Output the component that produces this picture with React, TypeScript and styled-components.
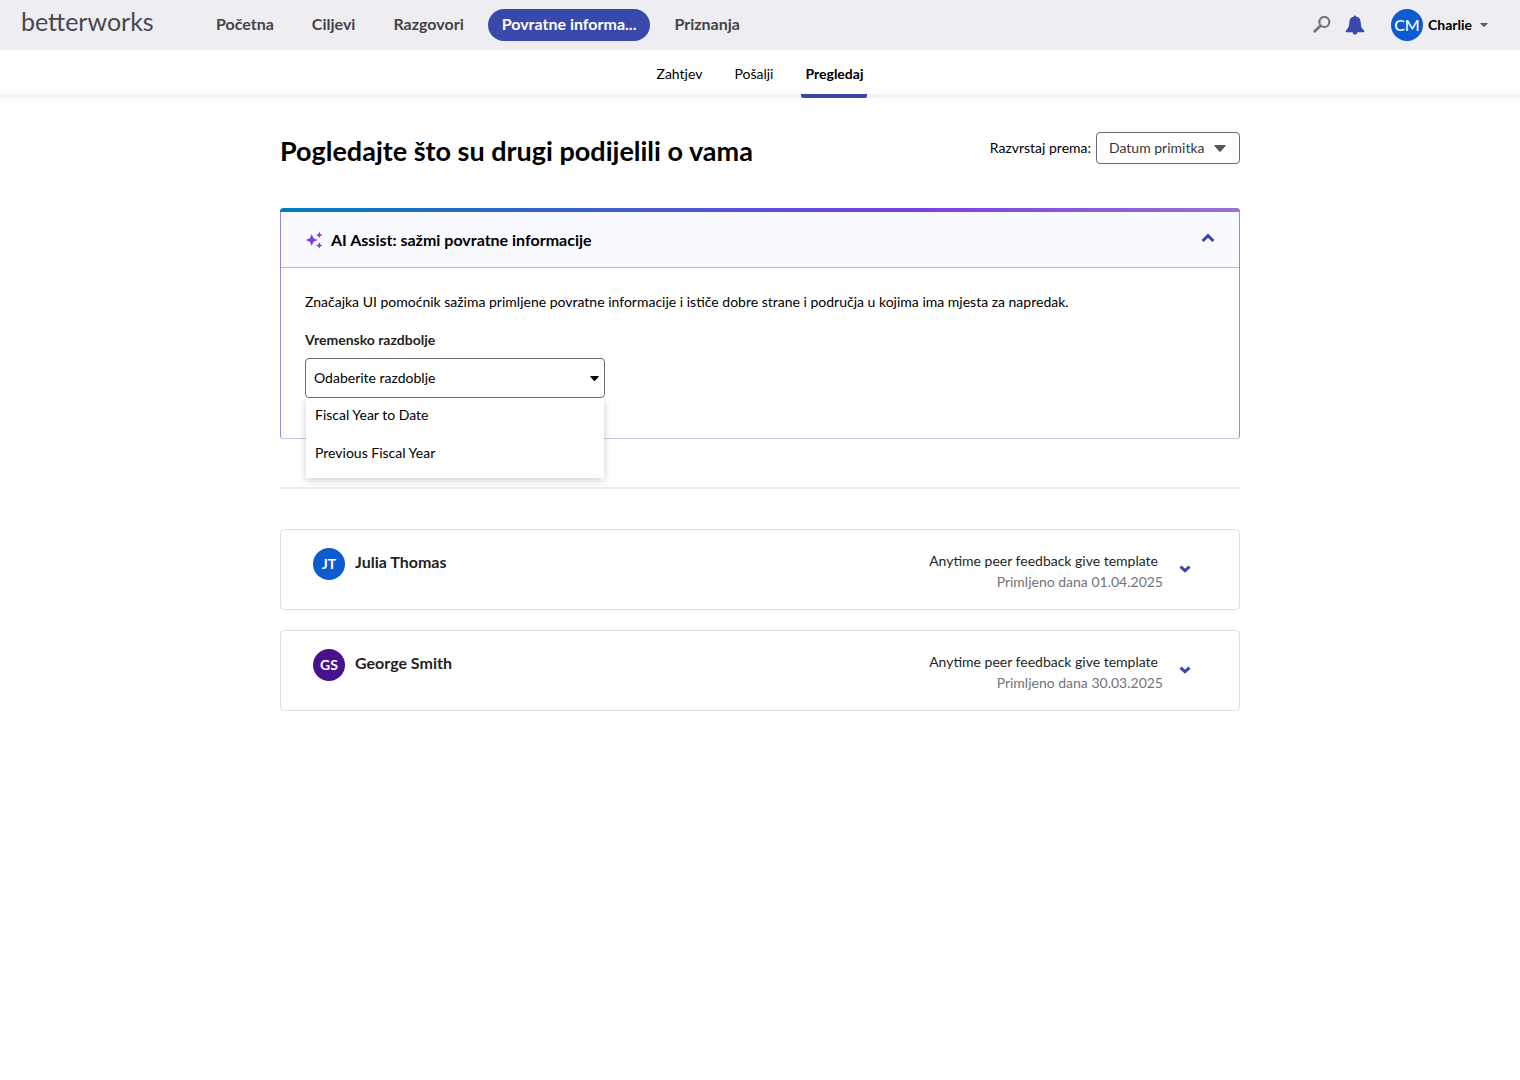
import React, { useState } from "react";
import styled, { createGlobalStyle } from "styled-components";

const font = `Lato, "Noto Sans", sans-serif`;
const indigo = "#3848ab";

const GlobalStyle = createGlobalStyle`
  *, *::before, *::after { box-sizing: border-box; }
  body { margin: 0; background: #fff; color: #000; font-family: ${font}; font-size: 14px; line-height: 20px; }
  button, select { font: inherit; color: inherit; }
  h1, h2, p, ul { margin: 0; padding: 0; }
  ul { list-style: none; }
`;

const TopBar = styled.header`
  display: flex;
  align-items: center;
  height: 50px;
  padding: 0 32px 0 21px;
  background: #eeedf2;
`;

const Logo = styled.a`
  width: 181px;
  padding-bottom: 8px;
  color: #48484a;
  font-size: 25px;
  font-weight: 400;
  line-height: 32px;
  text-decoration: none;
`;

const MainNav = styled.nav`
  display: flex;
  flex: 1;
  gap: 10px;
`;

const NavLink = styled.a<{ $active?: boolean }>`
  padding: 5px 14px 7px;
  border-radius: 16px;
  background: ${(p) => (p.$active ? indigo : "transparent")};
  color: ${(p) => (p.$active ? "#fff" : "#444347")};
  font-size: 16px;
  font-weight: 700;
  text-decoration: none;
  white-space: nowrap;
`;

const Tools = styled.div`
  display: flex;
  align-items: center;
  gap: 14px;
`;

const IconButton = styled.button`
  display: flex;
  padding: 0;
  border: 0;
  background: none;
  cursor: pointer;
`;

const UserButton = styled(IconButton)`
  align-items: center;
  gap: 5px;
  margin-left: 12px;
  font-weight: 700;
  svg { margin-left: 3px; }
`;

const Avatar = styled.span<{ $color: string; $large?: boolean }>`
  display: flex;
  align-items: center;
  justify-content: center;
  width: 32px;
  height: 32px;
  border-radius: 50%;
  background: ${(p) => p.$color};
  color: #fff;
  font-size: ${(p) => (p.$large ? "16px" : "14px")};
  font-weight: ${(p) => (p.$large ? 500 : 700)};
`;

const SubNav = styled.nav`
  display: flex;
  justify-content: center;
  gap: 24px;
  height: 48px;
  border-bottom: 4px solid #f4f4f6;
`;

const SubLink = styled.a<{ $active?: boolean }>`
  height: 48px;
  padding: 14px 4px 10px;
  border-bottom: 4px solid ${(p) => (p.$active ? indigo : "transparent")};
  border-radius: 2px;
  color: #000;
  font-weight: ${(p) => (p.$active ? 700 : 400)};
  text-decoration: none;
`;

const Page = styled.main`
  max-width: 1000px;
  margin: 0 auto;
  padding: 34px 20px;
`;

const TitleRow = styled.div`
  display: flex;
  justify-content: space-between;
  align-items: flex-start;
  margin-bottom: 38px;
`;

const Title = styled.h1`
  font-size: 27px;
  font-weight: 700;
  line-height: 38px;
`;

const SortField = styled.div`
  display: flex;
  align-items: center;
  gap: 5px;
`;

const SelectBox = styled.div<{ $arrowInset: number }>`
  display: grid;
  align-items: center;
  > * { grid-area: 1 / 1; }
  > svg {
    justify-self: end;
    margin-right: ${(p) => p.$arrowInset}px;
    pointer-events: none;
  }
`;

const Select = styled.select<{ $tall?: boolean }>`
  width: ${(p) => (p.$tall ? "300px" : "144px")};
  height: ${(p) => (p.$tall ? "40px" : "32px")};
  padding: 0 ${(p) => (p.$tall ? "8px" : "12px")};
  border: 1px solid #6b6b70;
  border-radius: 4px;
  background: #fff;
  color: ${(p) => (p.$tall ? "#000" : "#37363a")};
  appearance: none;
`;

const Panel = styled.section`
  border: 1px solid #8f8be0;
  border-top: 0;
  border-bottom-color: #c4c3ea;
  border-radius: 4px;
`;

const PanelStripe = styled.div`
  height: 4px;
  margin: 0 -1px;
  border-radius: 4px 4px 0 0;
  background: linear-gradient(90deg, #007cba 0%, #7e3fe8 68%, #9872cf 100%);
`;

const PanelHeader = styled.div`
  display: flex;
  align-items: center;
  gap: 8px;
  height: 56px;
  padding: 0 24px;
  border-bottom: 1px solid #b4b1e8;
  background: #f9faff;
`;

const PanelTitle = styled.h2`
  flex: 1;
  font-size: 16px;
  font-weight: 700;
`;

const PanelToggle = styled(IconButton)`
  padding-bottom: 4px;
`;

const PanelBody = styled.div`
  display: flex;
  flex-direction: column;
  align-items: flex-start;
  padding: 24px 24px 40px;
`;

const Description = styled.p`
  margin-bottom: 18px;
`;

const FieldLabel = styled.label`
  margin-bottom: 8px;
  color: #1f1f22;
  font-weight: 700;
`;

const PeriodField = styled.div`
  position: relative;
`;

const Menu = styled.ul`
  position: absolute;
  top: 100%;
  left: 1px;
  right: 1px;
  z-index: 2;
  height: 80px;
  background: #fff;
  box-shadow: 0 2px 8px rgba(0, 0, 0, 0.2);
  clip-path: inset(0 -12px -12px -12px);
`;

const MenuItem = styled.li`
  padding: 7px 9px 11px;
  cursor: pointer;
`;

const Divider = styled.hr`
  height: 2px;
  margin: 48px 0 40px;
  border: 0;
  background: #ececef;
`;

const CardList = styled.ul`
  display: flex;
  flex-direction: column;
  gap: 20px;
`;

const Card = styled.li`
  display: flex;
  align-items: flex-start;
  gap: 10px;
  height: 81px;
  padding: 18px 48px 0 32px;
  border: 1px solid #dfdee5;
  border-radius: 4px;
`;

const PersonName = styled.h2`
  flex: 1;
  color: #1f1f22;
  font-size: 16px;
  font-weight: 700;
  line-height: 28px;
`;

const CardMeta = styled.div`
  padding-top: 3px;
  color: #1f1f22;
  text-align: right;
  p + p { color: #747378; }
`;

const TemplateName = styled.p`
  margin: 0 5px 1px 0;
`;

const CardToggle = styled(IconButton)`
  margin: 17px 0 0 6px;
`;

const Caret = ({ w, h, color }: { w: number; h: number; color: string }) => (
  <svg width={w} height={h} viewBox="0 0 12 7" preserveAspectRatio="none" aria-hidden="true">
    <path d="M.6 0h10.8q.6.2.2.9L6.7 6.5q-.7.8-1.4 0L.4.9Q0 .2.6 0Z" fill={color} />
  </svg>
);

const Chevron = ({ up }: { up?: boolean }) => (
  <svg width={up ? 14 : 12} height={up ? 10 : 8} viewBox={up ? "0 0 14 10" : "0 0 12 8"} fill="none" stroke={indigo} strokeWidth="3" aria-hidden="true">
    <path d={up ? "M1.6 8 7 2.6 12.4 8" : "M1.5 1.7 6 5.7 10.5 1.7"} />
  </svg>
);

const SearchIcon = () => (
  <svg width="18" height="18" viewBox="0 0 18 18" fill="none" stroke="#77767a" aria-hidden="true">
    <circle cx="11.3" cy="6" r="5" strokeWidth="2.2" />
    <path d="M7.5 9.8 1.7 15.3" strokeWidth="2.8" strokeLinecap="round" />
  </svg>
);

const BellIcon = () => (
  <svg width="20" height="20" viewBox="0 0 20 20" fill={indigo} aria-hidden="true">
    <path d="M10 .6c.7 0 1.1.5 1.2 1.200 2.900.4 4.200 2.100 4.400 4.700.3 4.300.7 6.600 3.500 9 .6.600.3 1.700-.7 1.700h-6c-.2 1.500-1.100 2.300-2.400 2.300s-2.200-.8-2.400-2.300h-6c-1 0-1.300-1.100-.7-1.700 2.800-2.400 3.200-4.700 3.500-9 .2-2.600 1.500-4.300 4.400-4.700.1-.7.5-1.200 1.200-1.200Z" />
  </svg>
);

const SparkleIcon = () => (
  <svg width="18" height="18" viewBox="0 0 18 18" fill="#7c3aed" aria-hidden="true">
    <path d="M6.700 3 8.500 7.200 12.700 9 8.500 10.800 6.700 15 4.900 10.800.7 9 4.900 7.200Z" />
    <path d="M14.300.8 15.300 2.900 17.400 3.900 15.300 4.900 14.300 7 13.300 4.900 11.200 3.900 13.300 2.900Z" />
    <path d="M14.300 11.300 15.300 13.400 17.400 14.400 15.300 15.400 14.300 17.500 13.300 15.400 11.200 14.400 13.300 13.400Z" />
  </svg>
);

const navItems = ["Početna", "Ciljevi", "Razgovori", "Povratne informa...", "Priznanja"];
const subItems = ["Zahtjev", "Pošalji", "Pregledaj"];
const periods = ["Fiscal Year to Date", "Previous Fiscal Year"];
const feedback = [
  { initials: "JT", name: "Julia Thomas", color: "#0e5bd0", date: "01.04.2025" },
  { initials: "GS", name: "George Smith", color: "#47128c", date: "30.03.2025" },
];

export default function App() {
  const [period, setPeriod] = useState("");
  const [menuOpen, setMenuOpen] = useState(true);

  return (
    <>
      <GlobalStyle />
      <TopBar>
        <Logo href="#">betterworks</Logo>
        <MainNav>
          {navItems.map((item, i) => (
            <NavLink key={item} href="#" $active={i === 3}>{item}</NavLink>
          ))}
        </MainNav>
        <Tools>
          <IconButton aria-label="Traži"><SearchIcon /></IconButton>
          <IconButton aria-label="Obavijesti"><BellIcon /></IconButton>
          <UserButton>
            <Avatar $color="#0e5bd0" $large>CM</Avatar>
            Charlie
            <Caret w={8} h={4} color="#5c5b60" />
          </UserButton>
        </Tools>
      </TopBar>
      <SubNav>
        {subItems.map((item, i) => (
          <SubLink key={item} href="#" $active={i === 2}>{item}</SubLink>
        ))}
      </SubNav>
      <Page>
        <TitleRow>
          <Title>Pogledajte što su drugi podijelili o vama</Title>
          <SortField>
            <label htmlFor="sort">Razvrstaj prema:</label>
            <SelectBox $arrowInset={14}>
              <Select id="sort"><option>Datum primitka</option></Select>
              <Caret w={12} h={7} color="#55545a" />
            </SelectBox>
          </SortField>
        </TitleRow>
        <Panel>
          <PanelStripe />
          <PanelHeader>
            <SparkleIcon />
            <PanelTitle>AI Assist: sažmi povratne informacije</PanelTitle>
            <PanelToggle aria-label="Sažmi"><Chevron up /></PanelToggle>
          </PanelHeader>
          <PanelBody>
            <Description>
              Značajka UI pomoćnik sažima primljene povratne informacije i ističe dobre strane i područja u kojima ima mjesta za napredak.
            </Description>
            <FieldLabel htmlFor="period">Vremensko razdbolje</FieldLabel>
            <PeriodField>
              <SelectBox $arrowInset={6}>
                <Select id="period" $tall value={period} onChange={(e) => setPeriod(e.target.value)}>
                  <option value="">Odaberite razdoblje</option>
                  {periods.map((p) => <option key={p}>{p}</option>)}
                </Select>
                <Caret w={9} h={5} color="#000" />
              </SelectBox>
              {menuOpen && (
                <Menu role="listbox">
                  {periods.map((p) => (
                    <MenuItem
                      key={p}
                      role="option"
                      aria-selected={p === period}
                      onClick={() => { setPeriod(p); setMenuOpen(false); }}
                    >
                      {p}
                    </MenuItem>
                  ))}
                </Menu>
              )}
            </PeriodField>
          </PanelBody>
        </Panel>
        <Divider />
        <CardList>
          {feedback.map((f) => (
            <Card key={f.name}>
              <Avatar $color={f.color}>{f.initials}</Avatar>
              <PersonName>{f.name}</PersonName>
              <CardMeta>
                <TemplateName>Anytime peer feedback give template</TemplateName>
                <p>Primljeno dana {f.date}</p>
              </CardMeta>
              <CardToggle aria-label="Proširi"><Chevron /></CardToggle>
            </Card>
          ))}
        </CardList>
      </Page>
    </>
  );
}
